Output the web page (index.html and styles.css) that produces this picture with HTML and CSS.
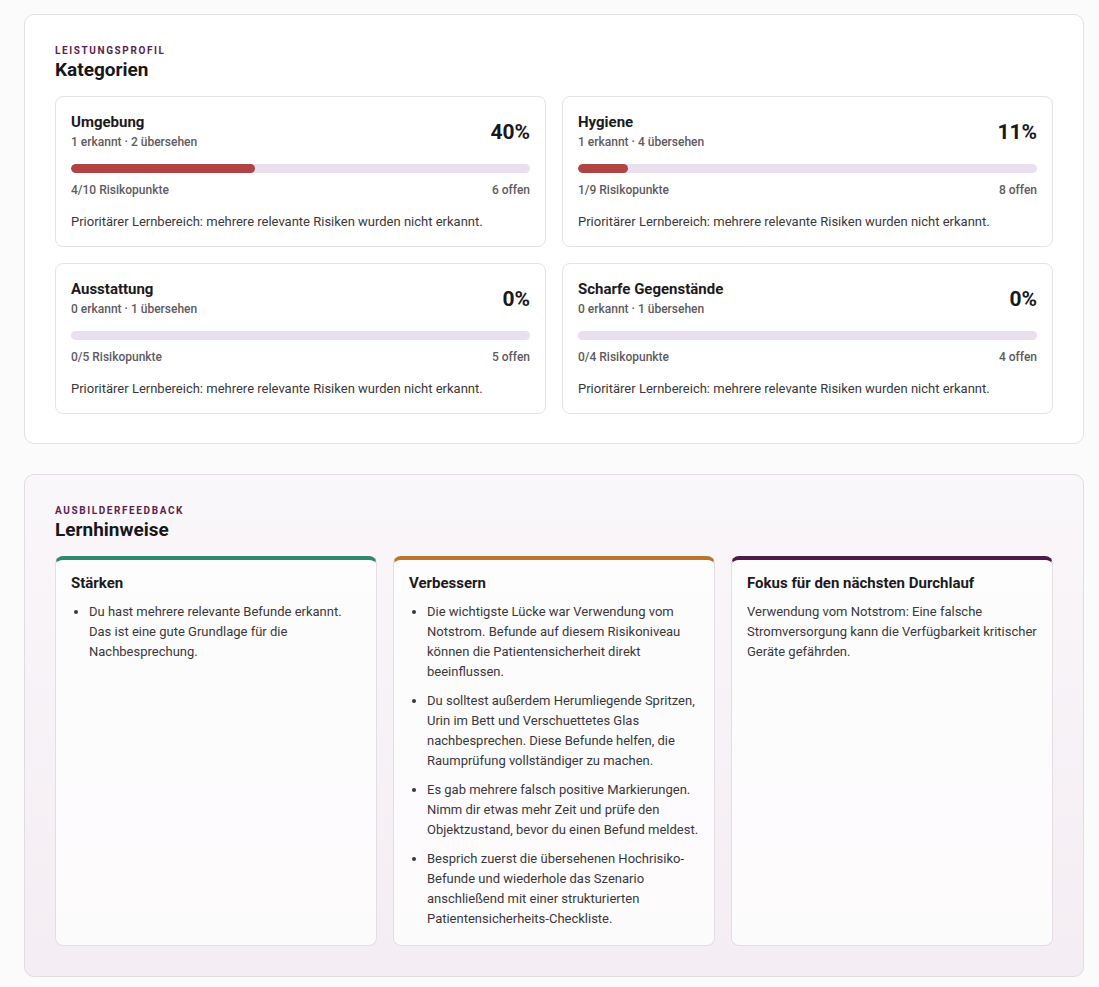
FILE: index.html
```html
<!DOCTYPE html>
<html lang="de">
<head>
  <meta charset="UTF-8">
  <meta name="viewport" content="width=device-width, initial-scale=1.0">
  <title>Auswertung</title>
  <link rel="stylesheet" href="styles.css">
</head>
<body>

  <section class="panel">
    <div class="eyebrow">Leistungsprofil</div>
    <h2 class="panel-title">Kategorien</h2>

    <div class="category-grid">
      <div class="category">
        <div class="category-head">
          <div>
            <div class="category-name">Umgebung</div>
            <div class="category-sub">1 erkannt · 2 übersehen</div>
          </div>
          <div class="category-pct">40%</div>
        </div>
        <div class="bar"><div class="bar-fill" style="width: 40%"></div></div>
        <div class="category-meta"><span>4/10 Risikopunkte</span><span>6 offen</span></div>
        <p class="category-note">Prioritärer Lernbereich: mehrere relevante Risiken wurden nicht erkannt.</p>
      </div>

      <div class="category">
        <div class="category-head">
          <div>
            <div class="category-name">Hygiene</div>
            <div class="category-sub">1 erkannt · 4 übersehen</div>
          </div>
          <div class="category-pct">11%</div>
        </div>
        <div class="bar"><div class="bar-fill" style="width: 11%"></div></div>
        <div class="category-meta"><span>1/9 Risikopunkte</span><span>8 offen</span></div>
        <p class="category-note">Prioritärer Lernbereich: mehrere relevante Risiken wurden nicht erkannt.</p>
      </div>

      <div class="category">
        <div class="category-head">
          <div>
            <div class="category-name">Ausstattung</div>
            <div class="category-sub">0 erkannt · 1 übersehen</div>
          </div>
          <div class="category-pct">0%</div>
        </div>
        <div class="bar"><div class="bar-fill" style="width: 0%"></div></div>
        <div class="category-meta"><span>0/5 Risikopunkte</span><span>5 offen</span></div>
        <p class="category-note">Prioritärer Lernbereich: mehrere relevante Risiken wurden nicht erkannt.</p>
      </div>

      <div class="category">
        <div class="category-head">
          <div>
            <div class="category-name">Scharfe Gegenstände</div>
            <div class="category-sub">0 erkannt · 1 übersehen</div>
          </div>
          <div class="category-pct">0%</div>
        </div>
        <div class="bar"><div class="bar-fill" style="width: 0%"></div></div>
        <div class="category-meta"><span>0/4 Risikopunkte</span><span>4 offen</span></div>
        <p class="category-note">Prioritärer Lernbereich: mehrere relevante Risiken wurden nicht erkannt.</p>
      </div>
    </div>
  </section>

  <section class="panel panel-feedback">
    <div class="eyebrow">Ausbilderfeedback</div>
    <h2 class="panel-title">Lernhinweise</h2>

    <div class="feedback-grid">
      <div class="feedback-card strengths">
        <h3>Stärken</h3>
        <ul>
          <li>Du hast mehrere relevante Befunde erkannt. Das ist eine gute Grundlage für die Nachbesprechung.</li>
        </ul>
      </div>

      <div class="feedback-card improve">
        <h3>Verbessern</h3>
        <ul>
          <li>Die wichtigste Lücke war Verwendung vom Notstrom. Befunde auf diesem Risikoniveau können die Patientensicherheit direkt beeinflussen.</li>
          <li>Du solltest außerdem Herumliegende Spritzen, Urin im Bett und Verschuettetes Glas nachbesprechen. Diese Befunde helfen, die Raumprüfung vollständiger zu machen.</li>
          <li>Es gab mehrere falsch positive Markierungen. Nimm dir etwas mehr Zeit und prüfe den Objektzustand, bevor du einen Befund meldest.</li>
          <li>Besprich zuerst die übersehenen Hochrisiko-Befunde und wiederhole das Szenario anschließend mit einer strukturierten Patientensicherheits-Checkliste.</li>
        </ul>
      </div>

      <div class="feedback-card focus">
        <h3>Fokus für den nächsten Durchlauf</h3>
        <p>Verwendung vom Notstrom: Eine falsche Stromversorgung kann die Verfügbarkeit kritischer Geräte gefährden.</p>
      </div>
    </div>
  </section>

</body>
</html>
```

FILE: styles.css
```css
body {
  font-family: Roboto, "Liberation Sans", Arial, sans-serif;
  margin: 0;
  padding: 14px 15px 20px 24px;
  background-color: #fcfbfc;
  color: #1c1a1d;
}

.panel {
  background-color: #ffffff;
  border: 1px solid #e4e0e4;
  border-radius: 10px;
  padding: 29px 30px 29px;
  margin-bottom: 30px;
}

.panel-feedback {
  background: linear-gradient(180deg, #faf7fa 0%, #f4edf3 100%);
  border-color: #e2dbe2;
  padding-bottom: 30px;
}

.eyebrow {
  font-size: 10px;
  font-weight: 700;
  letter-spacing: 1.6px;
  text-transform: uppercase;
  color: #5b1f52;
  line-height: 14px;
}

.panel-title {
  font-size: 19px;
  font-weight: 700;
  margin: 0 0 14px;
  line-height: 24px;
  color: #18161a;
}

.category-grid {
  display: grid;
  grid-template-columns: 1fr 1fr;
  gap: 16px;
}

.category {
  border: 1px solid #e6e2e6;
  border-radius: 8px;
  padding: 15px 15px 15px;
}

.category-head {
  display: flex;
  justify-content: space-between;
  align-items: center;
}

.category-name {
  font-size: 15px;
  font-weight: 700;
  line-height: 20px;
}

.category-sub {
  font-size: 12px;
  font-weight: 500;
  color: #5e5a5f;
  line-height: 18px;
  margin-top: 1px;
}

.category-pct {
  font-size: 21px;
  font-weight: 700;
  color: #1a181b;
}

.bar {
  height: 9px;
  background-color: #eadfee;
  border-radius: 5px;
  overflow: hidden;
  margin-top: 13px;
}

.bar-fill {
  height: 100%;
  background-color: #b04343;
  border-radius: 5px;
}

.category-meta {
  display: flex;
  justify-content: space-between;
  font-size: 12px;
  font-weight: 500;
  color: #5e5a5f;
  margin-top: 9px;
  line-height: 16px;
}

.category-note {
  font-size: 13px;
  color: #3a373b;
  margin: 15px 0 0;
  line-height: 18px;
}

.feedback-grid {
  display: grid;
  grid-template-columns: repeat(3, 1fr);
  gap: 16px;
}

.feedback-card {
  background-color: rgba(255, 255, 255, 0.75);
  border: 1px solid #e4dde4;
  border-top: 4px solid #2e8a6a;
  border-radius: 8px;
  padding: 13px 15px 14px;
  min-height: 358px;
}

.feedback-card.improve {
  border-top-color: #b8772e;
}

.feedback-card.focus {
  border-top-color: #4e1a48;
}

.feedback-card h3 {
  font-size: 15px;
  font-weight: 700;
  margin: 0 0 9px;
  line-height: 20px;
}

.feedback-card ul {
  margin: 0;
  padding-left: 18px;
}

.feedback-card li {
  font-size: 13px;
  line-height: 20px;
  color: #3a373b;
  margin-bottom: 9px;
}

.feedback-card li:last-child {
  margin-bottom: 0;
}

.feedback-card p {
  font-size: 13px;
  line-height: 20px;
  color: #3a373b;
  margin: 0;
}
```
